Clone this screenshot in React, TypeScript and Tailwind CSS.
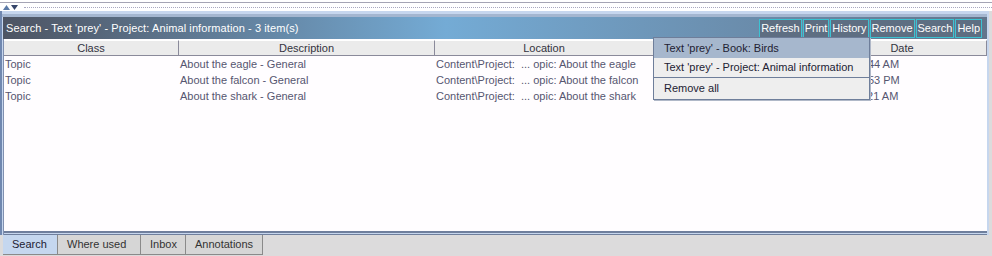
import React from "react";

const cols = [
  { name: "Class", w: "w-[175px]" },
  { name: "Description", w: "w-[256px]" },
  { name: "Location", w: "w-[219px]" },
  { name: "Language", w: "w-[164px]" },
  { name: "Date", w: "flex-1" },
];

const rows = [
  ["Topic", "About the eagle - General", "Content\\Project:  ... opic: About the eagle", "", "2/5/04 10:44 AM"],
  ["Topic", "About the falcon - General", "Content\\Project:  ... opic: About the falcon", "", "2/5/04 12:53 PM"],
  ["Topic", "About the shark - General", "Content\\Project:  ... opic: About the shark", "", "2/5/04 11:21 AM"],
];

const buttons = ["Refresh", "Print", "History", "Remove", "Search", "Help"];
const tabs = [
  { name: "Search", w: "w-[55px]" },
  { name: "Where used", w: "w-[83px]" },
  { name: "Inbox", w: "w-[45px]" },
  { name: "Annotations", w: "w-[77px]" },
];

export default function App() {
  return (
    <div className="relative w-[992px] h-[256px] bg-[#dcdbdc] flex flex-col font-['Liberation_Sans',Arial,sans-serif] text-[11px] overflow-hidden">
      {/* top splitter */}
      <div className="h-[3px] bg-white border-b border-[#a4a4b4]" />
      <div className="h-[8px] bg-white flex items-center pl-[3px] gap-[6px]">
        <div className="flex items-center gap-[1px]">
          <svg width="7" height="5" viewBox="0 0 7 5"><path d="M0 5 L3.5 0 L7 5 Z" fill="#5b7aa6" /></svg>
          <svg width="7" height="5" viewBox="0 0 7 5"><path d="M0 0 L3.5 5 L7 0 Z" fill="#36466a" /></svg>
        </div>
        <div className="flex-1 border-t border-dotted border-[#a8a8c0]" />
      </div>

      {/* panel */}
      <div className="flex flex-col h-[224px] mr-[3px] bg-[#c6d6ee] pt-[3px] pl-[1px] pr-[2px] border-l-2 border-[#7088b0]">
        <div className="h-[3px] bg-[#a4b6d0] -ml-[1px]" />
        <div className="h-[22px] flex items-center justify-between bg-linear-to-r from-[#4d5463] via-[#74abd5] via-45% to-[#62758c] pl-[3px] pr-[5px]">
          <span className="text-white text-[11px] tracking-[0.1px] pt-[1px]">Search - Text 'prey' - Project: Animal information - 3 item(s)</span>
          <div className="flex gap-[1px] h-[19px]">
            {buttons.map((b) => (
              <div
                key={b}
                className="px-[1px] h-full flex items-center text-white text-[11px] bg-[#5e6e82] border border-[#3cc3d3]"
              >
                {b}
              </div>
            ))}
          </div>
        </div>

        <div className="flex-1 flex flex-col bg-[#fffdff] border-l border-[#8090b0]">
          <div className="flex h-[16px] bg-[#ebebeb] mt-[1px]">
            {cols.map((c) => (
              <div
                key={c.name}
                className={`${c.w} flex items-center justify-center text-[#333340] border-r border-b border-[#8a8a9a] border-t border-t-white`}
              >
                {c.name}
              </div>
            ))}
          </div>
          {rows.map((r, i) => (
            <div key={i} className="flex h-[16px] items-center text-[#565670]">
              {r.map((v, j) => (
                <div key={j} className={`${cols[j].w} pl-[1px] whitespace-pre overflow-hidden`}>
                  {v}
                </div>
              ))}
            </div>
          ))}
          <div className="flex-1" />
          <div className="h-[4px] border-t-2 border-b border-[#6f7f9d] bg-[#c6d6ee]" />
        </div>
      </div>

      {/* tabs */}
      <div className="flex pl-[3px] h-[20px]">
        {tabs.map((t, i) => (
          <div
            key={t.name}
            className={`${t.w} h-[20px] flex items-center pl-[9px] border-r border-b border-[#8a8a8a] ${
              i === 0 ? "bg-[#c5d7ef] text-[#222233]" : "bg-[#d6d6d6] text-[#333333]"
            }`}
          >
            {t.name}
          </div>
        ))}
      </div>

      {/* popup menu */}
      <div className="absolute left-[653px] top-[37px] w-[217px] bg-[#eeeeee] border border-[#6e7e9a] text-[#222233] shadow-[1px_1px_0_#b0b8c8]">
        <div className="h-[20px] flex items-center pl-[10px] bg-[#a6b7cd]">Text 'prey' - Book: Birds</div>
        <div className="h-[20px] flex items-center pl-[10px] border-b border-[#6e7e9a]">
          Text 'prey' - Project: Animal information
        </div>
        <div className="h-[21px] flex items-center pl-[10px]">Remove all</div>
      </div>
    </div>
  );
}
